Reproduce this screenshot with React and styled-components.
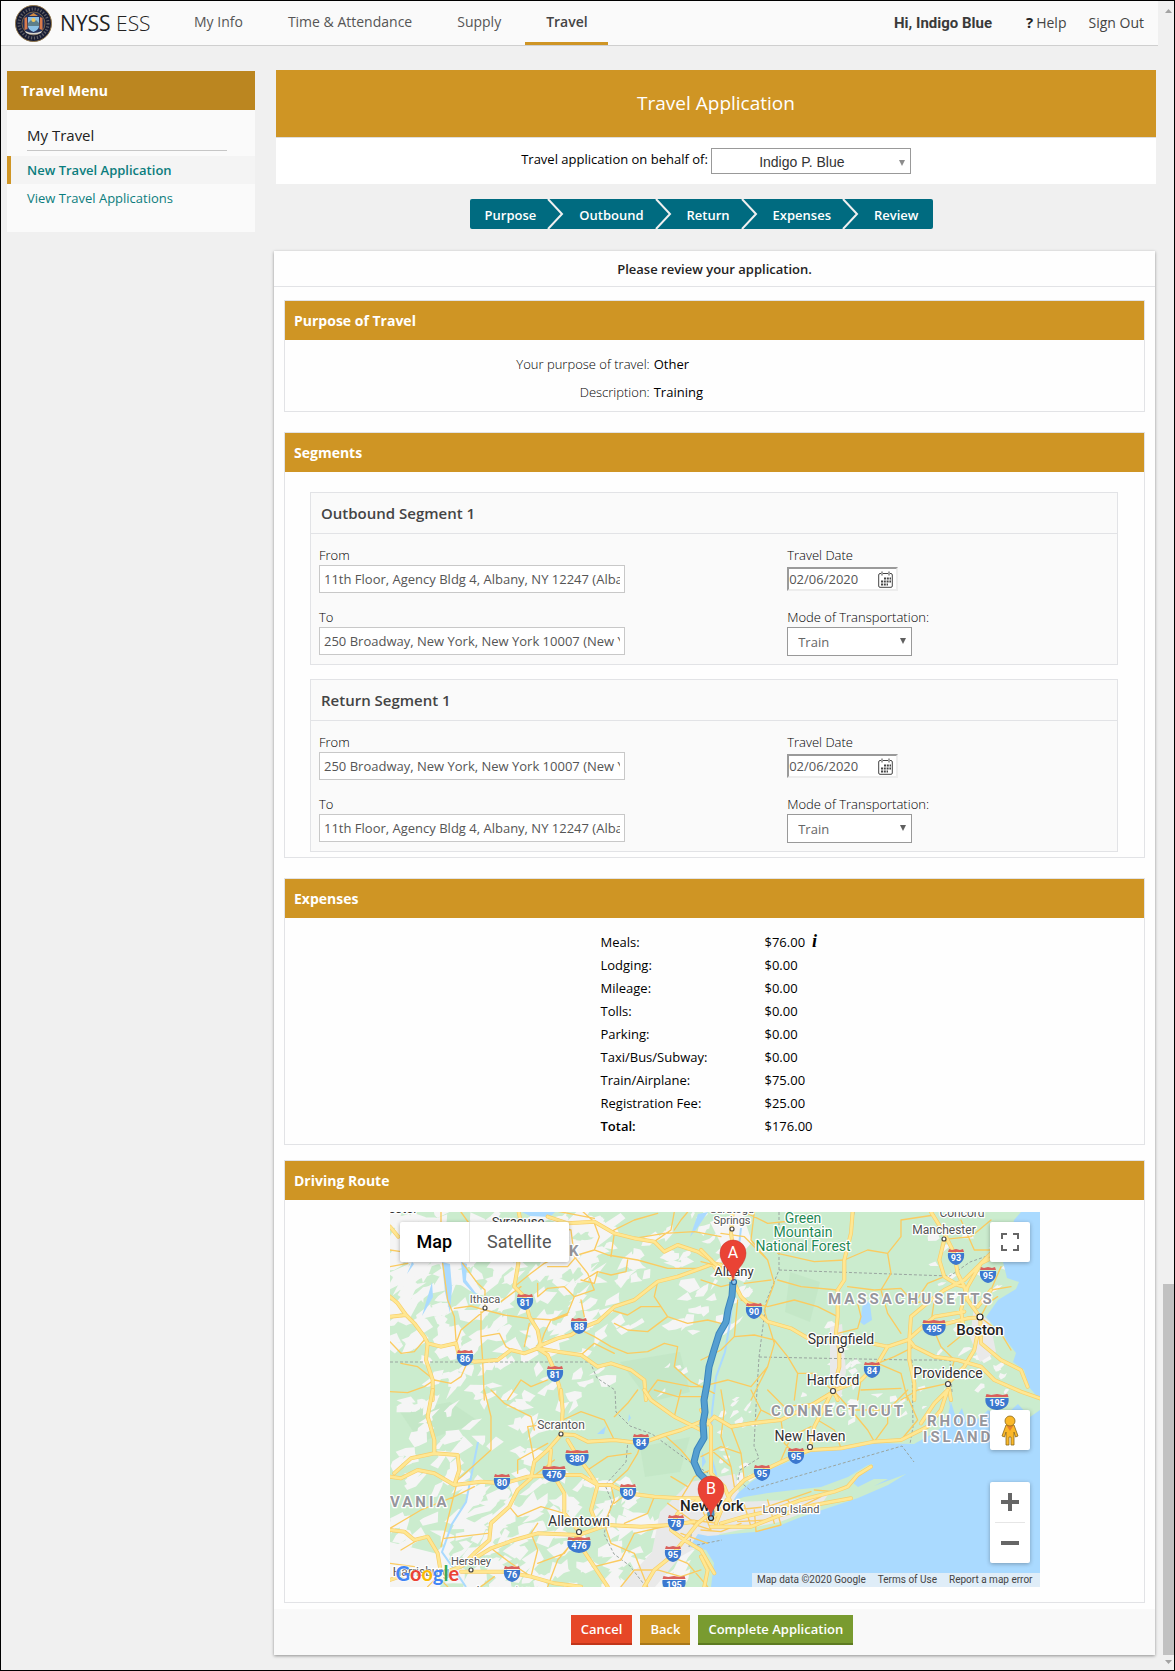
import React from "react";
import styled, { createGlobalStyle, css } from "styled-components";

const GlobalStyle = createGlobalStyle`
  *, *::before, *::after { box-sizing: border-box; }
  body { margin: 0; background: #f0f0f0; }
  body, button, input, select {
    font-family: "Open Sans", "Liberation Sans", sans-serif;
    font-size: 13px;
    line-height: 18px;
    color: #000;
  }
  h1, h2, h3, p, ul, ol { margin: 0; padding: 0; }
  ul, ol { list-style: none; }
  a { color: inherit; text-decoration: none; }
`;

/* ---------- page frame ---------- */

const Frame = styled.div`
  display: flex;
  min-height: 100vh;
  border: 1px solid #000;
  background: #f0f0f0;
`;

const Page = styled.div`
  flex: 1;
  min-width: 0;
`;

const Rail = styled.div`
  display: flex;
  flex-direction: column;
  align-items: flex-end;
  width: 16px;
  padding: 4px 0;
`;

const RailArrow = styled.svg`
  display: block;
  width: 11px;
  height: 11px;
  fill: #a3a3a3;
`;

const RailSpace = styled.div`
  flex: 345;
`;

const RailThumb = styled.div`
  flex: 101;
  width: 11px;
  background: #c1c1c1;
`;

/* ---------- top bar ---------- */

const TopBar = styled.header`
  display: flex;
  align-items: stretch;
  height: 45px;
  padding: 0 14px;
  background: #fafafa;
  border-bottom: 1px solid #cfcfcf;
`;

const Brand = styled.a`
  display: flex;
  align-items: center;
  gap: 8px;
  width: 140px;
  margin-right: 18px;
  font-size: 21px;
  line-height: 40px;
  color: #222;
  white-space: nowrap;
  svg { display: block; flex: none; }
`;

const Thin = styled.span`
  font-weight: 300;
`;

const Nav = styled.nav`
  display: flex;
  flex: 1;
`;

const NavLink = styled.a`
  display: block;
  padding: 0 20px 0 21px;
  font-size: 14px;
  line-height: 41px;
  border-bottom: 3px solid ${(p) => (p.$active ? "#cf9524" : "transparent")};
  color: ${(p) => (p.$active ? "#444" : "#555")};
  font-weight: ${(p) => (p.$active ? 600 : 400)};
  margin-right: ${(p) => (p.$active ? 0 : 4)}px;
  white-space: nowrap;
`;

const UserBar = styled.div`
  display: flex;
  gap: 22px;
  font-size: 14px;
  line-height: 43px;
  color: #444;
  white-space: nowrap;
  b { margin-right: 3px; font-size: 15px; color: #222; }
`;

const Greeting = styled.strong`
  margin-right: 12px;
  font-family: Roboto, "Liberation Sans", sans-serif;
  font-size: 15px;
  font-weight: 700;
  line-height: 45px;
  color: #3a3a3a;
`;

/* ---------- columns ---------- */

const Columns = styled.div`
  display: flex;
  align-items: flex-start;
  gap: 19px;
  padding: 24px 2px 14px 6px;
`;

const Sidebar = styled.aside`
  flex: none;
  width: 248px;
  margin-top: 1px;
  padding-bottom: 20px;
  background: #fafafa;
`;

const SidebarTitle = styled.h2`
  padding: 0 14px;
  font-size: 14px;
  font-weight: 700;
  line-height: 39px;
  color: #fff;
  background: #bb8620;
`;

const MenuHeading = styled.h3`
  margin: 10px 28px 5px 20px;
  font-size: 15px;
  font-weight: 400;
  line-height: 30px;
  color: #222;
  border-bottom: 1px solid #c6c6c6;
`;

const MenuItem = styled.a`
  display: block;
  padding-left: 16px;
  border-left: 4px solid ${(p) => (p.$current ? "#cf9524" : "transparent")};
  background: ${(p) => (p.$current ? "#f4f4f4" : "transparent")};
  font-weight: ${(p) => (p.$current ? 600 : 400)};
  line-height: 28px;
  color: #0b7d7d;
`;

const Main = styled.main`
  flex: 1;
  min-width: 0;
`;

/* ---------- application head ---------- */

const Banner = styled.h1`
  margin-left: 2px;
  font-size: 19px;
  font-weight: 400;
  line-height: 67px;
  text-align: center;
  color: #fff;
  background: #cf9524;
`;

const BehalfRow = styled.div`
  display: flex;
  justify-content: center;
  align-items: flex-start;
  gap: 3px;
  height: 47px;
  margin-left: 2px;
  padding-top: 10px;
  background: #fff;
  border-top: 1px solid #ddd;
  label { line-height: 23px; }
`;

const SelectBox = styled.div`
  position: relative;
  width: ${(p) => p.$width}px;
  svg {
    position: absolute;
    right: 6px;
    top: 50%;
    width: 6px;
    height: 6px;
    margin-top: ${(p) => (p.$centered ? -1 : -4)}px;
    pointer-events: none;
    fill: ${(p) => (p.$centered ? "#8c8c8c" : "#606060")};
  }
`;

const Select = styled.select`
  display: block;
  width: 100%;
  height: ${(p) => (p.$centered ? 26 : 29)}px;
  appearance: none;
  border: 1px solid #999;
  border-radius: 0;
  background: #fff;
  ${(p) =>
    p.$centered
      ? css`
          padding: 2px 18px 0 0;
          font-family: "Liberation Sans", sans-serif;
          font-size: 14px;
          text-align-last: center;
          color: #333;
        `
      : css`
          padding: 0 20px 0 10px;
          color: #666;
        `}
`;

const StepBar = styled.nav`
  display: flex;
  justify-content: center;
  padding: 15px 27px 22px 0;
`;

const Steps = styled.ol`
  display: flex;
  height: 30px;
  padding: 0 15px;
  background: #006b80;
  border-radius: 2px;
  color: #fff;
  font-weight: 600;
  line-height: 32px;
`;

const Step = styled.li`
  display: flex;
  svg {
    display: block;
    width: 17px;
    height: 30px;
    margin: 0 15px 0 11px;
    fill: none;
    stroke: #f0f0f0;
    stroke-width: 2;
  }
`;

/* ---------- review card ---------- */

const Card = styled.section`
  margin-right: 1px;
  background: #fefefe;
  box-shadow: 0 1px 3px rgba(0, 0, 0, 0.4);
`;

const CardIntro = styled.p`
  padding-top: 2px;
  font-weight: 600;
  line-height: 33px;
  text-align: center;
  color: #222;
  border-bottom: 1px solid #e2e3e6;
`;

const PanelList = styled.div`
  display: flex;
  flex-direction: column;
  padding: 13px 10px 6px;
`;

const Panel = styled.section`
  border: 1px solid #e2e3e6;
  margin-bottom: ${(p) => p.$after || 0}px;
`;

const PanelTitle = styled.h2`
  padding: 0 9px;
  font-size: 14px;
  font-weight: 700;
  line-height: 39px;
  color: #fff;
  background: #cf9524;
`;

const Facts = styled.dl`
  display: grid;
  grid-template-columns: 3fr 4fr;
  column-gap: 4px;
  margin: 0;
  padding: 10px 4px 5px 0;
  line-height: 28px;
  dt { text-align: right; font-weight: 300; }
  dd { margin: 0; }
`;

const SegmentList = styled.div`
  display: flex;
  flex-direction: column;
  gap: 14px;
  padding: 20px 26px 5px 25px;
`;

const SegmentBox = styled.section`
  border: 1px solid #e2e3e6;
  background: #fafafa;
`;

const SegmentTitle = styled.h3`
  padding: 0 10px;
  font-size: 15px;
  font-weight: 600;
  line-height: 40px;
  color: #444;
  border-bottom: 1px solid #e2e3e6;
`;

const SegmentGrid = styled.div`
  display: grid;
  grid-template-columns: 58% 1fr;
  column-gap: 10px;
  grid-template-rows: 62px 52px;
  padding: 12px 8px 4px;
`;

const Field = styled.div`
  display: flex;
  flex-direction: column;
  align-items: flex-start;
  label {
    line-height: 19px;
    font-weight: 300;
  }
`;

const AddressInput = styled.input`
  width: 306px;
  max-width: 100%;
  height: 28px;
  padding: 0 4px;
  border: 1px solid #c8c8c8;
  background: #fff;
  color: #555;
`;

const DateBox = styled.div`
  display: flex;
  align-items: center;
  width: 111px;
  height: 24px;
  margin-top: 2px;
  padding-right: 3px;
  border: 2px solid;
  border-color: #9a9a9a #ededed #ededed #9a9a9a;
  background: #fff;
`;

const DateInput = styled.input`
  flex: 1;
  min-width: 0;
  height: 18px;
  padding: 0;
  border: 0;
  background: none;
  color: #555;
`;

const IconButton = styled.button`
  display: block;
  padding: 0;
  border: 0;
  background: none;
  svg { display: block; }
`;

const ExpenseTable = styled.table`
  width: 228px;
  margin: 12px auto 7px;
  border-collapse: collapse;
  th, td {
    height: 23px;
    padding: 0;
    text-align: left;
    font-weight: 400;
    white-space: nowrap;
  }
  th { width: 164px; }
  tr:last-child th { font-weight: 600; }
`;

const InfoMark = styled.i`
  margin-left: 7px;
  font-family: "Liberation Serif", serif;
  font-size: 18px;
  line-height: 16px;
  font-weight: 700;
`;

const Actions = styled.div`
  display: flex;
  justify-content: center;
  gap: 8px;
  padding: 6px 5px 10px 0;
  background: #f9f9f9;
`;

const tones = {
  danger: ["#e64727", "#c1351a"],
  warn: ["#cf9524", "#a87719"],
  go: ["#799b30", "#5d7b21"],
};

const ActionButton = styled.button`
  height: 30px;
  padding: 0 10px;
  border: 0;
  border-bottom: 2px solid ${(p) => tones[p.$tone][1]};
  background: ${(p) => tones[p.$tone][0]};
  color: #fff;
  font-weight: 600;
`;

/* ---------- map ---------- */

const MapFrame = styled.div`
  position: relative;
  width: 650px;
  max-width: 100%;
  margin: 12px auto 15px;
  overflow: hidden;
  font-family: Roboto, "Liberation Sans", sans-serif;
`;

const MapCanvas = styled.svg`
  display: block;
  width: 100%;
  height: auto;
  font-family: Roboto, "Liberation Sans", sans-serif;
`;

const Floating = styled.div`
  position: absolute;
  display: flex;
  background: #fff;
  border-radius: 2px;
  box-shadow: 0 1px 4px rgba(0, 0, 0, 0.3);
`;

const MapTypes = styled(Floating)`
  left: 10px;
  top: 10px;
`;

const MapTypeButton = styled.button`
  height: 40px;
  padding: 0 17px;
  border: 0;
  border-left: ${(p) => (p.$active ? 0 : 1)}px solid #e6e6e6;
  background: none;
  font-family: inherit;
  font-size: 18px;
  font-weight: ${(p) => (p.$active ? 500 : 400)};
  color: ${(p) => (p.$active ? "#000" : "#565656")};
`;

const MapTools = styled(Floating)`
  right: 10px;
  top: ${(p) => p.$top}px;
  flex-direction: column;
`;

const ToolButton = styled.button`
  display: flex;
  align-items: center;
  justify-content: center;
  width: 40px;
  height: 40px;
  padding: 0;
  border: 0;
  background: none;
`;

const ToolRule = styled.hr`
  width: 30px;
  margin: 0 auto;
  border: 0;
  border-top: 1px solid #e6e6e6;
`;

const Credits = styled.div`
  position: absolute;
  right: 0;
  bottom: 0;
  display: flex;
  gap: 12px;
  padding: 0 7px 0 5px;
  background: rgba(245, 245, 245, 0.7);
  font-size: 10px;
  line-height: 14px;
  color: #444;
`;

const GoogleMark = styled.a`
  position: absolute;
  left: 6px;
  bottom: 3px;
  font-family: Lato, "Open Sans", sans-serif;
  font-size: 20px;
  line-height: 22px;
  font-weight: 700;
  text-shadow: 0 0 2px #fff, 0 0 2px #fff;
`;

const Tint = styled.span`
  color: ${(p) => p.$c};
`;

/* Scattered farmland shapes; a fixed seed keeps them the same on each load. */
function makePatches() {
  let seed = 77;
  const rnd = () => {
    seed = (seed * 16807) % 2147483647;
    return seed / 2147483647;
  };
  const out = [];
  const zones = [
    [0, 0, 230, 70, 90, 17],
    [0, 60, 130, 80, 40, 16],
    [0, 90, 215, 110, 80, 12],
    [150, 20, 150, 100, 55, 12],
    [0, 200, 150, 80, 35, 13],
    [60, 260, 190, 115, 75, 14],
    [0, 290, 150, 85, 60, 15],
    [220, 300, 90, 75, 45, 14],
    [300, 0, 60, 120, 30, 9],
    [440, 110, 30, 90, 18, 7],
    [540, 20, 80, 160, 35, 7],
    [330, 180, 40, 90, 20, 6],
    [250, 150, 350, 60, 14, 6],
  ];
  zones.forEach(([x, y, w, h, n, s]) => {
    for (let i = 0; i < n; i++) {
      const cx = x + rnd() * w;
      const cy = y + rnd() * h;
      const slant = rnd() * 0.9 - 0.1;
      const pts = [];
      const k = 4 + Math.floor(rnd() * 4);
      for (let j = 0; j < k; j++) {
        const a = (j / k) * 6.283 + rnd() * 0.8;
        const r = s * (0.2 + rnd() * 0.9);
        const u = Math.cos(a) * r;
        const v = Math.sin(a) * r * 0.7;
        pts.push(`${(cx + u).toFixed(1)},${(cy + v - u * slant).toFixed(1)}`);
      }
      out.push(pts.join(" "));
    }
  });
  return out;
}

const patches = makePatches();

/* Roads are digitised per map sheet at three units to the pixel. */
const sheets = [
  {
    at: "translate(-9 -12) scale(.3333)",
    major:
      "M412 30L418 60L405 100L412 190L400 260L430 290L445 350L470 390L478 430L470 445L500 465L520 510L535 560L540 600M470 440L530 415L570 405L600 385L650 365L700 320L760 300L830 245L890 230L960 205L1000 190L1020 195M500 50L560 70L640 65L700 100L760 115L820 125L850 155L890 135L950 155L990 180L1000 200L1020 225M27 350L75 345L100 370L130 410L140 430L180 440L225 430L235 470L280 485L350 480L390 450L430 460L470 445L530 455L600 465L650 500L690 490L750 510L790 540L795 600M140 430L135 480L155 540L155 600M27 290L50 310L75 345M27 80L52 110",
    minor:
      "M180 36L180 66M27 150L60 155M185 190L200 300L220 350L225 420M240 36L300 120M245 190L290 250L312 270L312 330L240 390L225 430M312 330L370 345L440 355L520 360L560 345M220 325L270 318L312 330M27 425L60 460L100 455L130 420M27 575L80 578L130 560L160 540L210 550L240 530L260 485M300 335L300 410L305 480L310 600M300 410L355 400L375 440L400 455M360 305L420 260M400 260L450 220L490 190L530 170M470 290L500 265L550 260L580 290L560 340L510 360L490 400L480 430M580 290L640 270L620 220L580 170L570 90L530 80M640 70L655 110L640 150L680 165L770 180L860 205L960 205M740 180L735 215L690 225L650 215L610 240M600 390L640 410L690 440L740 460L800 455L850 430M690 330L740 345L780 320L840 320L860 350L800 395L740 390L700 370M860 350L920 370L980 360L1020 370M850 430L890 440L880 500L930 545L1000 580M830 540L800 580M830 540L880 550L930 560L980 560M600 30L640 66M690 95L760 60L830 40M880 90L900 60L920 36M700 100L690 170M600 300L610 350M430 440L445 370M600 465L640 430L700 460M510 30L640 55M160 540L110 500L60 490M830 245L820 290L860 350M380 600L420 540L450 560L500 540M640 150L590 165L560 200L500 200M880 36L870 90L820 125M470 250L470 290M27 200L80 190M760 115L850 100L940 95L1020 110M600 240L640 250L650 215",
  },
  {
    at: "translate(311 -12) scale(.3333)",
    major:
      "M95 36L90 100L100 170L95 240M0 150L40 190L95 240L120 290L160 330L200 365L270 385L330 420L420 410L510 430L560 440L620 420L660 385L740 370L800 355L838 352M455 36L450 100L430 180L430 240L410 270L410 350L405 400L415 450L415 500L396 570L410 600M560 440L530 490L480 540L396 573M690 36L730 100L760 160L770 220L790 260L800 300L838 352M730 118L715 180L730 230L770 255L790 260M900 160L840 190L800 260L780 330L790 400L830 400L820 450L790 500L741 550L750 600M880 150L840 190L790 240L730 270L690 300L630 350L625 420L640 440L700 470L770 480L840 500L880 540L960 575L1017 595M838 352L840 430L900 480L960 510L980 560M625 420L625 480L640 550L640 600M660 385L700 350L790 335M870 270L830 320",
    minor:
      "M160 36L150 120L200 180L220 250L190 330L200 365M0 185L60 200M130 250L210 240M230 160L340 185L430 180L500 150L560 160L600 110L600 60L700 45M560 160L570 220L540 270L560 340L600 400M120 300L200 320L280 300L350 320L410 350M440 260L520 270L600 265L640 310L680 300M470 310L480 350L470 385L410 400M200 365L220 430L200 500L180 540L150 600M100 410L160 405L220 420L260 470L290 520L280 600M290 520L340 520L396 573M0 480L60 450L100 410L110 300M530 490L600 520L620 600M480 570L600 565M700 300L690 370L720 440L760 480L741 550L650 570L600 600M130 36L200 70L300 60M230 240L300 260L410 270M900 200L870 270L930 260M838 352L900 400L930 450M790 400L740 440M0 240L60 260L100 250M60 100L130 110L200 180M870 60L810 110L730 118M730 230L680 250L640 310M396 573L350 600M470 600L480 540M838 352L860 310L890 290M780 60L820 150L880 150M640 440L580 470L530 490M0 560L80 540L150 560L200 500",
  },
  {
    at: "translate(-9 178) scale(.3333)",
    major:
      "M155 0L140 80L160 150L160 190L90 205L40 250M160 190L230 195L235 240L220 285M27 260L60 265L110 240L160 250L220 285L300 275L370 280L440 260L520 255L600 255L650 285L690 285L740 310L820 320L900 325L960 325M540 0L545 60L541 133L500 180L460 215L450 265L410 300L385 350L330 400L325 450L280 490L240 530L180 550L100 545L27 570M541 133L580 135L620 155L700 150L780 160L850 135L900 120L960 95M560 150L590 200L620 240L650 285M510 180L505 230L520 260L550 310L550 370L594 425L600 470L640 530L680 590M240 530L330 475L400 450L470 430L594 435L680 405L780 410L870 405L940 395M790 0L810 30L880 80L960 120M240 545L370 545L450 560L520 580L600 590M960 325L890 370L870 420L910 450L960 480L1000 550M1000 360L950 400L910 450L870 500L820 540L790 590M650 285L630 360L650 410M27 420L70 425L100 450L140 440L170 490L180 550",
    minor:
      "M310 0L330 80L330 180L230 270L180 470M27 415L120 360L220 320L280 290M190 445L320 430M410 250L410 210L500 160M330 0L370 40L450 80L460 120M460 215L440 110L520 100M700 150L670 90L600 65L545 90M780 160L770 190L740 240L690 285M690 285L700 330L670 400L690 460L760 490L800 590M820 320L800 370L730 400M850 135L900 180L950 240M870 260L920 290M900 325L940 260L990 240M980 20L890 20L820 0M880 80L900 0M740 310L700 340M450 560L470 480L450 430L470 400M330 475L390 520L450 560M594 425L550 490L470 520M640 530L720 510L760 430L870 405M720 590L760 540L830 540L900 560L960 540M27 520L100 530M200 590L170 560L140 590M60 480L110 450M450 265L520 210M550 370L480 350L410 380L385 350M930 400L990 420L960 350M860 340L930 390L1010 400M900 430L980 460M870 500L920 520L980 590M700 80L740 40L770 0M620 240L680 200L750 190M300 590L340 560M500 590L530 510L594 435",
  },
  {
    at: "translate(311 178) scale(.3333)",
    major:
      "M45 400L65 350L90 310L130 270L200 235L285 195L327 180L420 175L520 155L600 150L680 110L720 60L740 0M327 175L340 110L350 90L396 0M0 120L40 80L90 110L150 100L240 90L340 40L390 10M60 400L130 380L220 360L300 330L400 305L440 290L470 255L510 230M30 410L150 410L240 375L340 345L450 325M90 310L60 360L30 390M0 500L20 540L10 590M740 0L700 40L660 100M30 250L70 290L90 340M0 60L30 110L30 250",
    minor:
      "M60 0L70 60L60 140L90 230L100 290M90 110L120 190L130 270M150 0L180 60L160 100M240 90L250 160L285 195M350 90L400 120L420 175M396 0L450 60L500 120L520 155M450 60L560 60L620 0M520 155L560 100L560 60M620 20L650 90L600 150M160 360L165 425L240 405L230 370M340 300L400 305M110 395L200 390L300 350L360 320M330 110L270 140L240 210M30 180L90 230M0 200L60 170L120 190M180 60L240 90M200 0L250 50L340 40M0 420L60 425L120 400M130 345L150 410M200 330L220 400M260 330L280 360M100 360L200 350L330 305",
  },
];

const borders =
  "M0 150L200 150L207 166L225 178L226 200L240 214L262 222L300 250L318 261M238 228L236 250L215 273L222 290L214 322L224 342L240 354L256 375M389 0L389 58L376 90L369 145L366 195L364 234L369 246L350 258L348 268L360 278L512 234L524 250M389 58L530 63L560 64L580 50L600 43M369 145L522 148L560 148L562 180M522 148L523 215L520 232M464 0L460 30L454 50M299 335L302 318M302 334L332 328";

const water =
  "M631 0L624 8L620 30L613 50L617 66L629 70L626 77L608 88L596 105L604 114L611 116L616 128L626 141L623 150L634 158L639 175L650 188V0ZM650 198L640 205L628 192L612 206L598 198L590 206L576 210L572 196L566 206L561 190L556 212L544 221L524 232L484 231L451 237L421 240L408 246L383 256L361 270L348 281L343 289L354 285L378 281L404 278L431 275L458 265L478 253L483 252L462 270L468 275L484 267L498 267L484 274L516 262L498 273L468 286L441 295L411 305L391 313L364 320L331 323L318 324L308 322L299 335L316 338L324 351L321 375H650Z";

const lakes =
  "M132 0L165 0L160 5L140 4ZM52 50L60 52L62 76L60 101L55 80ZM71 50L77 52L76 68L88 84L82 80L73 70ZM22 50L24 52L17 62ZM42 70L43 85L32 104ZM300 25L308 2L318 0L308 15ZM474 85L480 92L482 108L474 113L470 110ZM558 182L561 182L560 196ZM312 240L316 250L312 256ZM207 222L216 214L214 222ZM239 202L241 206L238 210Z";

const river = "M351 16L346 60L344 76L340 110L335 140L326 165L322 200L320 240L326 262L322 300";
const susquehanna = "M88 230L76 290L62 312L52 340L66 360L76 375";

const route =
  "M343 70L342 84L338 98L336 110L329 122L324 138L319 155L317 172L314 188L315 200L313 211L314 226L307 238L304 250L309 261L316 268L320 286L321 304";

const shields = [
  [135, 90, "81"], [189, 114, "88"], [75, 146, "86"], [165, 162, "81"],
  [364, 99, "90"], [566, 45, "93"], [598, 63, "95"], [544, 116, "495"],
  [482, 158, "84"], [607, 190, "195"], [406, 244, "95"], [372, 261, "95"],
  [251, 230, "84"], [187, 246, "380"], [164, 262, "476"], [112, 270, "80"],
  [238, 280, "80"], [286, 311, "78"], [283, 342, "95"], [189, 333, "476"],
  [122, 362, "76"], [284, 372, "195"],
];

const towns = [
  [13, 1, "ester", 13, 0], [128, 14, "Syracuse", 13, 0],
  [95, 91, "Ithaca", 11, 1], [342, 1, "Saratoga", 11, 0],
  [342, 12, "Springs", 11, 1], [344, 64, "Albany", 13, 0],
  [554, 22, "Manchester", 12, 1], [572, 5, "Concord", 12, 0],
  [451, 132, "Springfield", 14, 1], [443, 173, "Hartford", 14, 1],
  [558, 166, "Providence", 14, 1], [420, 229, "New Haven", 14, 1],
  [401, 301, "Long Island", 11, 0], [171, 217, "Scranton", 12, 1],
  [189, 314, "Allentown", 14, 1], [81, 353, "Hershey", 11, 1],
  [31, 364, "Harrisburg", 12, 0], [113, 383, "Lancaster", 12, 0],
];

const regions = [
  [179, 44, "K"], [438, 92, "MASSACHUSETTS"], [381, 204, "CONNECTICUT"],
  [537, 214, "RHODE"], [533, 230, "ISLAND"], [0, 295, "VANIA"],
];

function Shield({ x, y, n }) {
  const w = n.length > 2 ? 23 : 16;
  const h = w / 2;
  return (
    <g transform={`translate(${x} ${y})`}>
      <path d={`M${-h} -4H${h}C${h + 1} 3 ${h - 3} 7 0 8C${3 - h} 7 ${-h - 1} 3 ${-h} -4Z`} fill="#3b78cf" />
      <path d={`M${1 - h} -8L${-h / 2} -7L0 -8L${h / 2} -7L${h - 1} -8L${h} -5H${-h}Z`} fill="#d9605c" />
      <text y="4" textAnchor="middle" fontSize="9" fontWeight="700" fill="#fff">{n}</text>
    </g>
  );
}

function Marker({ x, y, letter }) {
  return (
    <g transform={`translate(${x} ${y})`}>
      <path d="M0 0C-1 -11 -13 -16 -13 -28A13 13 0 0 1 13 -28C13 -16 1 -11 0 0Z" fill="#ea4335" stroke="#c5352a" strokeWidth=".5" />
      <text y="-23" textAnchor="middle" fontSize="16" fill="#fff">{letter}</text>
    </g>
  );
}

function RouteMap() {
  return (
    <MapFrame>
      <MapCanvas viewBox="0 0 650 375" role="img" aria-label="Driving route from Albany to New York">
        <rect width="650" height="375" fill="#cbecce" />
        <g fill="#bfe5c3">
          <path d="M230 150L290 140L300 180L260 190ZM10 200L60 190L90 210L30 230ZM250 235L300 225L290 260L255 265ZM400 60L430 70L420 110L395 100Z" opacity=".6" />
        </g>
        <g fill="#f5f5f5">
          {patches.map((p, i) => <polygon key={i} points={p} />)}
          <path d="M320 10L352 0L362 30L350 44L352 66L340 60L330 30ZM0 330L60 345L50 375H0Z" />
        </g>
        <path d="M270 300L300 270L345 262L350 285L330 322L290 345L265 375H230L262 340ZM584 95L600 110L606 140L590 150L580 125ZM440 115L452 112L456 160L450 190L440 180ZM344 290L400 288L440 280L430 294L390 310L330 322Z" fill="#e9e9e9" />
        <path d={water} fill="#aadaff" />
        <path d={lakes} fill="#aadaff" />
        <path d={river} fill="none" stroke="#aadaff" strokeWidth="2" />
        <path d={susquehanna} fill="none" stroke="#aadaff" strokeWidth="2" />
        <path d={borders} fill="none" stroke="#9aa5a0" strokeWidth="1" strokeDasharray="3 2" />
        {sheets.map((s) => (
          <g key={s.at} transform={s.at} fill="none" strokeLinejoin="round" strokeLinecap="round">
            <path d={s.minor} stroke="#fbcb60" strokeWidth="4" />
            <path d={s.major} stroke="#f8ce6a" strokeWidth="12" />
            <path d={s.major} stroke="#ffe792" strokeWidth="8" />
          </g>
        ))}
        <path d={route} fill="none" stroke="#3b85bb" strokeWidth="7" strokeLinejoin="round" />
        <path d={route} fill="none" stroke="#559fd1" strokeWidth="5" strokeLinejoin="round" />
        <g stroke="#fff" strokeWidth="2.5" strokeLinejoin="round" paintOrder="stroke">
          {regions.map(([x, y, t]) => (
            <text key={t} x={x} y={y} fontSize="15" fontWeight="700" letterSpacing="3" fill="#96969c">{t}</text>
          ))}
          <g fontSize="14" fill="#1f8a55" textAnchor="middle">
            <text x="413" y="11">Green</text>
            <text x="413" y="25">Mountain</text>
            <text x="413" y="39">National Forest</text>
          </g>
          {towns.map(([x, y, t, s]) => (
            <text key={t} x={x} y={y} fontSize={s} textAnchor="middle" fill={s > 12 ? "#333" : "#555"}>{t}</text>
          ))}
          <g fontSize="15" fontWeight="500" fill="#222" textAnchor="middle">
            <text x="590" y="123">Boston</text>
            <text x="322" y="299">New York</text>
          </g>
        </g>
        <g fill="#fff" stroke="#444" strokeWidth="1.2">
          {towns.filter((t) => t[4]).map(([x, y, t, s]) => (
            <circle key={t} cx={x} cy={y + (s > 12 ? 6 : 5)} r={s > 12 ? 2.5 : 2} />
          ))}
          <circle cx="590" cy="105" r="3" stroke="#222" />
          <circle cx="344" cy="70" r="2.5" fill="#8ec5ee" stroke="#2b6ca3" />
          <circle cx="321" cy="306" r="2.5" fill="#8ec5ee" stroke="#222" />
        </g>
        {shields.map(([x, y, n]) => <Shield key={`${x}-${y}`} x={x} y={y} n={n} />)}
        <Marker x={343} y={69} letter="A" />
        <Marker x={321} y={305} letter="B" />
      </MapCanvas>

      <MapTypes>
        <MapTypeButton type="button" $active>Map</MapTypeButton>
        <MapTypeButton type="button">Satellite</MapTypeButton>
      </MapTypes>
      <MapTools $top={10}>
        <ToolButton type="button" aria-label="Toggle fullscreen view">
          <svg width="18" height="18" viewBox="0 0 18 18" fill="#666">
            <path d="M0 0H6V2H2V6H0ZM12 0H18V6H16V2H12ZM0 12H2V16H6V18H0ZM16 12H18V18H12V16H16Z" />
          </svg>
        </ToolButton>
      </MapTools>
      <MapTools $top={198}>
        <ToolButton type="button" aria-label="Street View">
          <svg width="18" height="31" viewBox="0 0 18 31" stroke="#8a6a1c" strokeWidth=".8" fill="#fbb829">
            <path d="M5 10H13L17 21L14.500 22L13 17V30H10V22H8V30H5V17L3.500 22L1 21Z" />
            <path d="M5.500 10.500H12.500L9 16Z" fill="#e8812a" stroke="none" />
            <circle cx="9" cy="6" r="5" />
          </svg>
        </ToolButton>
      </MapTools>
      <MapTools $top={270}>
        <ToolButton type="button" aria-label="Zoom in">
          <svg width="18" height="18" viewBox="0 0 18 18" fill="#666"><path d="M7 0H11V7H18V11H11V18H7V11H0V7H7Z" /></svg>
        </ToolButton>
        <ToolRule />
        <ToolButton type="button" aria-label="Zoom out">
          <svg width="18" height="18" viewBox="0 0 18 18" fill="#666"><path d="M0 7H18V11H0Z" /></svg>
        </ToolButton>
      </MapTools>
      <GoogleMark href="#google" aria-label="Google">
        <Tint $c="#4285f4">G</Tint>
        <Tint $c="#ea4335">o</Tint>
        <Tint $c="#fbbc05">o</Tint>
        <Tint $c="#4285f4">g</Tint>
        <Tint $c="#34a853">l</Tint>
        <Tint $c="#ea4335">e</Tint>
      </GoogleMark>
      <Credits>
        <span>Map data ©2020 Google</span>
        <a href="#terms">Terms of Use</a>
        <a href="#report">Report a map error</a>
      </Credits>
    </MapFrame>
  );
}

/* ---------- small drawings ---------- */

function Seal() {
  return (
    <svg width="37" height="37" viewBox="0 0 37 37" aria-hidden="true">
      <circle cx="18.500" cy="18.500" r="18" fill="#181c33" stroke="#8f7448" strokeWidth="1" />
      <circle cx="18.500" cy="18.500" r="14.500" fill="none" stroke="#b9b3a6" strokeWidth="3" strokeDasharray="1.200 1.800" opacity=".45" />
      <circle cx="18.500" cy="18.500" r="11.500" fill="#22305a" stroke="#8f7448" strokeWidth=".8" />
      <path d="M13 12H24V21C24 24 21 26 18.500 27C16 26 13 24 13 21Z" fill="#8cc0e6" />
      <path d="M13 18L16 15L18.500 17L21 15L24 18V21H13Z" fill="#5d7f8c" />
      <circle cx="18.500" cy="15" r="2" fill="#efc75a" />
      <path d="M14 11L18.500 8L23 11Z" fill="#d08a44" />
      <path d="M9.500 13L12 12L12.500 24L9.500 25ZM27.500 13L25 12L24.500 24L27.500 25Z" fill="#d97a4a" />
      <path d="M10 26Q18.500 30 27 26L26 28Q18.500 31 11 28Z" fill="#d8d6cf" />
    </svg>
  );
}

function Arrow() {
  return <svg viewBox="0 0 7 7" aria-hidden="true"><path d="M0 0H7L3.500 7Z" /></svg>;
}

function CalendarIcon() {
  return (
    <svg width="15" height="17" viewBox="0 0 15 17" fill="none" stroke="#444" aria-hidden="true">
      <path d="M3 2.500H2A1.500 1.500 0 0 0 .700 4V15A1.300 1.300 0 0 0 2 16.300H13A1.300 1.300 0 0 0 14.300 15V4A1.500 1.500 0 0 0 13 2.500H12M5 2.500H10M4 .500V4.500M11 .500V4.500" />
      <path d="M6 7.500H13M3 10.500H13M3 13.500H10" strokeWidth="2" strokeDasharray="2 .8" />
    </svg>
  );
}

/* ---------- content ---------- */

const albany = "11th Floor, Agency Bldg 4, Albany, NY 12247 (Albany)";
const newYork = "250 Broadway, New York, New York 10007 (New York)";

const segments = [
  { id: "out", title: "Outbound Segment 1", from: albany, to: newYork },
  { id: "ret", title: "Return Segment 1", from: newYork, to: albany },
];

const expenses = [
  ["Meals:", "$76.00"],
  ["Lodging:", "$0.00"],
  ["Mileage:", "$0.00"],
  ["Tolls:", "$0.00"],
  ["Parking:", "$0.00"],
  ["Taxi/Bus/Subway:", "$0.00"],
  ["Train/Airplane:", "$75.00"],
  ["Registration Fee:", "$25.00"],
  ["Total:", "$176.00"],
];

const steps = ["Purpose", "Outbound", "Return", "Expenses", "Review"];

function Segment({ id, title, from, to }) {
  return (
    <SegmentBox>
      <SegmentTitle>{title}</SegmentTitle>
      <SegmentGrid>
        <Field>
          <label htmlFor={`${id}-from`}>From</label>
          <AddressInput id={`${id}-from`} defaultValue={from} />
        </Field>
        <Field>
          <label htmlFor={`${id}-date`}>Travel Date</label>
          <DateBox>
            <DateInput id={`${id}-date`} defaultValue="02/06/2020" />
            <IconButton type="button" aria-label="Pick a date"><CalendarIcon /></IconButton>
          </DateBox>
        </Field>
        <Field>
          <label htmlFor={`${id}-to`}>To</label>
          <AddressInput id={`${id}-to`} defaultValue={to} />
        </Field>
        <Field>
          <label htmlFor={`${id}-mode`}>Mode of Transportation:</label>
          <SelectBox $width={125}>
            <Select id={`${id}-mode`} defaultValue="Train">
              <option>Train</option>
            </Select>
            <Arrow />
          </SelectBox>
        </Field>
      </SegmentGrid>
    </SegmentBox>
  );
}

export default function App() {
  return (
    <>
      <GlobalStyle />
      <Frame>
        <Page>
          <TopBar>
            <Brand href="#home">
              <Seal />
              <span>NYSS <Thin>ESS</Thin></span>
            </Brand>
            <Nav>
              <NavLink href="#info">My Info</NavLink>
              <NavLink href="#time">Time &amp; Attendance</NavLink>
              <NavLink href="#supply">Supply</NavLink>
              <NavLink href="#travel" $active>Travel</NavLink>
            </Nav>
            <UserBar>
              <Greeting>Hi, Indigo Blue</Greeting>
              <a href="#help"><b>?</b>Help</a>
              <a href="#signout">Sign Out</a>
            </UserBar>
          </TopBar>

          <Columns>
            <Sidebar>
              <SidebarTitle>Travel Menu</SidebarTitle>
              <MenuHeading>My Travel</MenuHeading>
              <MenuItem href="#new" $current>New Travel Application</MenuItem>
              <MenuItem href="#view">View Travel Applications</MenuItem>
            </Sidebar>

            <Main>
              <Banner>Travel Application</Banner>
              <BehalfRow>
                <label htmlFor="behalf">Travel application on behalf of:</label>
                <SelectBox $width={200} $centered>
                  <Select id="behalf" $centered defaultValue="Indigo P. Blue">
                    <option>Indigo P. Blue</option>
                  </Select>
                  <Arrow />
                </SelectBox>
              </BehalfRow>

              <StepBar aria-label="Application steps">
                <Steps>
                  {steps.map((s, i) => (
                    <Step key={s}>
                      {s}
                      {i < steps.length - 1 && (
                        <svg viewBox="0 0 17 30" aria-hidden="true"><path d="M1 0L15 15L1 30" /></svg>
                      )}
                    </Step>
                  ))}
                </Steps>
              </StepBar>

              <Card>
                <CardIntro>Please review your application.</CardIntro>
                <PanelList>
                  <Panel $after={20}>
                    <PanelTitle>Purpose of Travel</PanelTitle>
                    <Facts>
                      <dt>Your purpose of travel:</dt>
                      <dd>Other</dd>
                      <dt>Description:</dt>
                      <dd>Training</dd>
                    </Facts>
                  </Panel>

                  <Panel $after={20}>
                    <PanelTitle>Segments</PanelTitle>
                    <SegmentList>
                      {segments.map((s) => <Segment key={s.id} {...s} />)}
                    </SegmentList>
                  </Panel>

                  <Panel $after={15}>
                    <PanelTitle>Expenses</PanelTitle>
                    <ExpenseTable>
                      <tbody>
                        {expenses.map(([name, sum], i) => (
                          <tr key={name}>
                            <th scope="row">{name}</th>
                            <td>{sum}{i === 0 && <InfoMark>i</InfoMark>}</td>
                          </tr>
                        ))}
                      </tbody>
                    </ExpenseTable>
                  </Panel>

                  <Panel>
                    <PanelTitle>Driving Route</PanelTitle>
                    <RouteMap />
                  </Panel>
                </PanelList>
                <Actions>
                  <ActionButton type="button" $tone="danger">Cancel</ActionButton>
                  <ActionButton type="button" $tone="warn">Back</ActionButton>
                  <ActionButton type="button" $tone="go">Complete Application</ActionButton>
                </Actions>
              </Card>
            </Main>
          </Columns>
        </Page>
        <Rail aria-hidden="true">
          <RailArrow viewBox="0 0 11 11"><path d="M2 8H9L5.500 4Z" /></RailArrow>
          <RailSpace />
          <RailThumb />
          <RailArrow viewBox="0 0 11 11"><path d="M2 5H9L5.500 9Z" /></RailArrow>
        </Rail>
      </Frame>
    </>
  );
}
